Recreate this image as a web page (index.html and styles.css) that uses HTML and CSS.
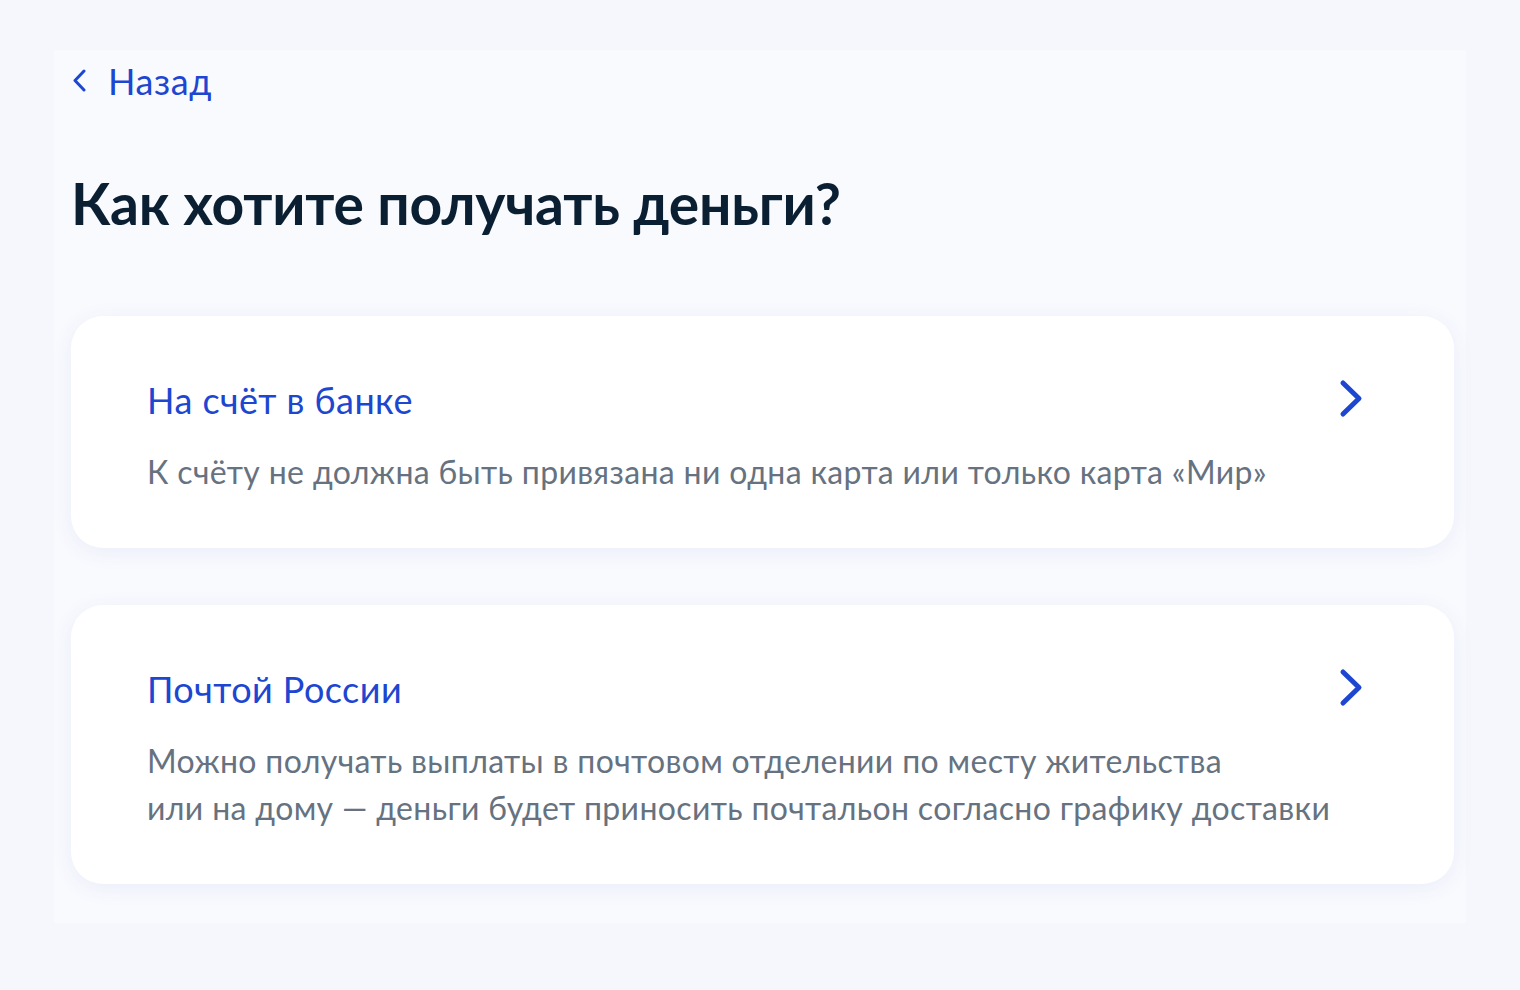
FILE: index.html
```html
<!DOCTYPE html>
<html lang="ru">
<head>
<meta charset="utf-8">
<title>Как хотите получать деньги?</title>
<link rel="stylesheet" href="styles.css">
</head>
<body>
<div class="page">
  <div class="panel">
    <a class="back" href="#">
      <svg class="back-icon" width="16" height="24" viewBox="0 0 16 24"><path d="M12 2 L3 11.5 L12 21" fill="none" stroke="#1d46d1" stroke-width="3" stroke-linecap="round" stroke-linejoin="round"/></svg>
      <span>Назад</span>
    </a>
    <h1 class="title">Как хотите получать деньги?</h1>
    <div class="options">
      <a class="card" href="#">
        <div class="card-body">
          <div class="card-title">На счёт в банке</div>
          <div class="card-text">К счёту не должна быть привязана ни одна карта или только карта «Мир»</div>
        </div>
        <svg class="chev" width="30" height="40" viewBox="0 0 30 40"><path d="M7 4 L23 19.5 L7 35" fill="none" stroke="#1d46d1" stroke-width="5" stroke-linecap="round" stroke-linejoin="round"/></svg>
      </a>
      <a class="card" href="#">
        <div class="card-body">
          <div class="card-title">Почтой России</div>
          <div class="card-text">Можно получать выплаты в почтовом отделении по месту жительства<br>или на дому — деньги будет приносить почтальон согласно графику доставки</div>
        </div>
        <svg class="chev" width="30" height="40" viewBox="0 0 30 40"><path d="M7 4 L23 19.5 L7 35" fill="none" stroke="#1d46d1" stroke-width="5" stroke-linecap="round" stroke-linejoin="round"/></svg>
      </a>
    </div>
  </div>
</div>
</body>
</html>
```

FILE: styles.css
```css
html, body {
  margin: 0;
  padding: 0;
}
body {
  background: #f5f7fc;
  font-family: Lato, "Noto Sans", sans-serif;
  width: 1520px;
  height: 990px;
  overflow: hidden;
}
.page {
  padding: 50px 54px 0 54px;
}
.panel {
  background: #f9fafe;
  padding: 0 12px 38px 17px;
  min-height: 873px;
  box-sizing: border-box;
}
.back {
  display: flex;
  align-items: center;
  gap: 20px;
  padding-top: 7px;
  height: 48px;
  color: #1d46d1;
  text-decoration: none;
  font-size: 36px;
  line-height: 48px;
  letter-spacing: 0.6px;
}
.back-icon {
  margin-left: 1px;
}
.title {
  margin: 0;
  margin-top: 62px;
  font-size: 57px;
  line-height: 72px;
  font-weight: 700;
  color: #0b1f33;
  letter-spacing: -0.2px;
}
.options {
  display: flex;
  flex-direction: column;
  gap: 57px;
  margin-top: 77px;
}
.card {
  display: flex;
  align-items: flex-start;
  justify-content: space-between;
  background: #ffffff;
  border-radius: 32px;
  box-shadow: 0 4px 22px rgba(40, 70, 180, 0.07);
  padding: 60px 88px 53px 76px;
  text-decoration: none;
}
.card-title {
  color: #1d46d1;
  font-size: 36px;
  line-height: 48px;
  letter-spacing: 0.45px;
}
.card-text {
  margin-top: 24px;
  color: #66727f;
  font-size: 32px;
  line-height: 47px;
  letter-spacing: 0.35px;
}
.chev {
  margin-top: 3px;
  flex: none;
}
```
